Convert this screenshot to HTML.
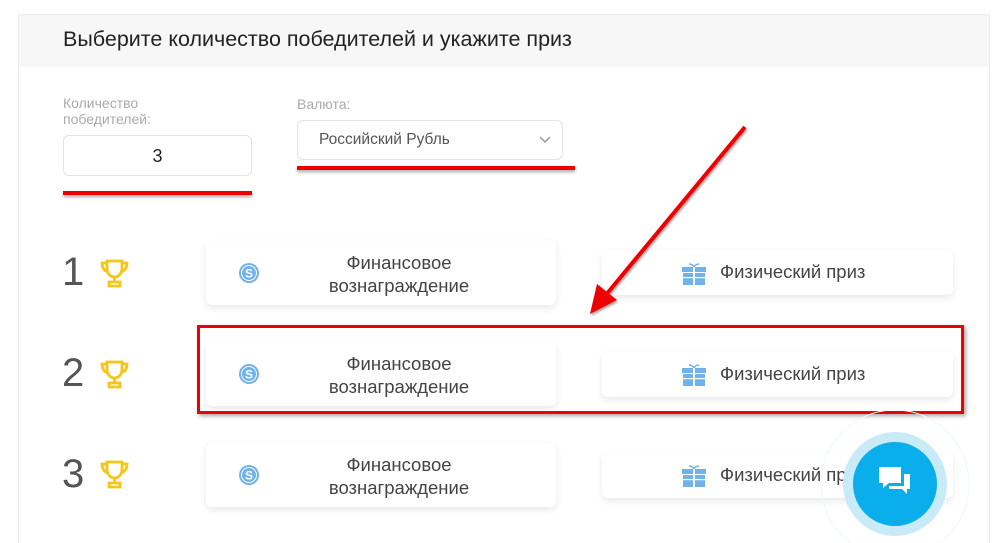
<!DOCTYPE html>
<html style="width:1000px;height:543px;overflow:hidden"><head><meta charset="utf-8"><style>
*{margin:0;padding:0;box-sizing:border-box}
body{width:1000px;height:543px;overflow:hidden;background:#fff;font-family:"Liberation Sans",sans-serif;position:relative}
.card{position:absolute;left:18px;top:14px;width:972px;height:529px;border:1px solid #ececec;border-bottom:none;background:#fff}
.head{position:absolute;left:19px;top:15px;width:970px;height:52px;background:#f7f7f7}
.t{position:absolute;white-space:nowrap}
.box{position:absolute;background:#fff;border-radius:6px;box-shadow:0 3px 8px rgba(0,0,0,.09)}
.num{position:absolute;left:62px;font-size:40px;color:#555;font-weight:300}
.fin{left:206px;width:350px;height:64px}
.phy{left:602px;width:351px;height:45px}
.fin .tx{position:absolute;left:36px;right:0;top:10px;text-align:center;font-size:18.5px;line-height:23px;color:#444}
.phy .tx{position:absolute;left:118px;top:11px;font-size:18.5px;color:#444}
.red{position:absolute;background:#e00;box-shadow:0 2px 3px rgba(0,0,0,.35)}
</style></head><body>
<div class="card"></div>
<div class="head"></div>
<div class="t" style="left:63px;top:27px;font-size:21.5px;color:#222">Выберите количество победителей и укажите приз</div>
<div class="t" style="left:63px;top:95px;font-size:14px;line-height:16px;color:#aaa">Количество<br>победителей:</div>
<div style="position:absolute;left:63px;top:135px;width:189px;height:41px;border:1px solid #e3e3e3;border-radius:6px;text-align:center;font-size:18px;line-height:40px;color:#222">3</div>
<div class="red" style="left:63px;top:191px;width:189px;height:4px"></div>
<div class="t" style="left:297px;top:96px;font-size:14px;color:#aaa">Валюта:</div>
<div style="position:absolute;left:297px;top:120px;width:266px;height:40px;border:1px solid #e3e3e3;border-radius:6px;font-size:15.5px;line-height:38px;color:#555;padding-left:21px">Российский Рубль
<svg style="position:absolute;right:11px;top:15px" width="12" height="8"><path d="M1 1l5 5 5-5" fill="none" stroke="#999" stroke-width="1.5"/></svg></div>
<div class="red" style="left:297px;top:166px;width:278px;height:4px"></div>

<div class="num" style="top:250px">1</div>
<div class="num" style="top:351px">2</div>
<div class="num" style="top:452px">3</div>
<svg style="position:absolute;left:99px;top:258px" width="31" height="31" viewBox="0 0 31 31"><g fill="none" stroke="#f5c518" stroke-width="2.8"><path d="M8 3h15v7c0 5-3 9-7.5 9S8 15 8 10z"/><path d="M8 5H3c0 6 3 8 6 9M23 5h5c0 6-3 8-6 9M15.5 19v4M10 28h11v-4H10z"/></g></svg>
<svg style="position:absolute;left:99px;top:359px" width="31" height="31" viewBox="0 0 31 31"><g fill="none" stroke="#f5c518" stroke-width="2.8"><path d="M8 3h15v7c0 5-3 9-7.5 9S8 15 8 10z"/><path d="M8 5H3c0 6 3 8 6 9M23 5h5c0 6-3 8-6 9M15.5 19v4M10 28h11v-4H10z"/></g></svg>
<svg style="position:absolute;left:99px;top:459px" width="31" height="31" viewBox="0 0 31 31"><g fill="none" stroke="#f5c518" stroke-width="2.8"><path d="M8 3h15v7c0 5-3 9-7.5 9S8 15 8 10z"/><path d="M8 5H3c0 6 3 8 6 9M23 5h5c0 6-3 8-6 9M15.5 19v4M10 28h11v-4H10z"/></g></svg>

<div class="box fin" style="top:241px"><svg style="position:absolute;left:32px;top:21px" width="22" height="22"><circle cx="11" cy="11" r="10" fill="#6fb3ea"/><circle cx="11" cy="11" r="7.5" fill="none" stroke="#fff" stroke-width="1"/><text x="11" y="15.5" font-size="12" font-weight="bold" fill="#fff" text-anchor="middle" font-family="Liberation Sans">S</text></svg><div class="tx">Финансовое<br>вознаграждение</div></div>
<div class="box fin" style="top:342px"><svg style="position:absolute;left:32px;top:21px" width="22" height="22"><circle cx="11" cy="11" r="10" fill="#6fb3ea"/><circle cx="11" cy="11" r="7.5" fill="none" stroke="#fff" stroke-width="1"/><text x="11" y="15.5" font-size="12" font-weight="bold" fill="#fff" text-anchor="middle" font-family="Liberation Sans">S</text></svg><div class="tx">Финансовое<br>вознаграждение</div></div>
<div class="box fin" style="top:443px"><svg style="position:absolute;left:32px;top:21px" width="22" height="22"><circle cx="11" cy="11" r="10" fill="#6fb3ea"/><circle cx="11" cy="11" r="7.5" fill="none" stroke="#fff" stroke-width="1"/><text x="11" y="15.5" font-size="12" font-weight="bold" fill="#fff" text-anchor="middle" font-family="Liberation Sans">S</text></svg><div class="tx">Финансовое<br>вознаграждение</div></div>

<div class="box phy" style="top:250px"><svg style="position:absolute;left:80px;top:11px" width="24" height="25"><g fill="#6fb3ea"><path d="M7 3c2 0 4 1 5 3 1-2 3-3 5-3" fill="none" stroke="#6fb3ea" stroke-width="1.5"/><rect x="0" y="6" width="24" height="5"/><rect x="1" y="12" width="22" height="12"/></g><rect x="11" y="6" width="2" height="18" fill="#fff"/><rect x="0" y="16" width="24" height="1.2" fill="#fff"/></svg><div class="tx">Физический приз</div></div>
<div class="box phy" style="top:352px"><svg style="position:absolute;left:80px;top:10px" width="24" height="25"><g fill="#6fb3ea"><path d="M7 3c2 0 4 1 5 3 1-2 3-3 5-3" fill="none" stroke="#6fb3ea" stroke-width="1.5"/><rect x="0" y="6" width="24" height="5"/><rect x="1" y="12" width="22" height="12"/></g><rect x="11" y="6" width="2" height="18" fill="#fff"/><rect x="0" y="16" width="24" height="1.2" fill="#fff"/></svg><div class="tx">Физический приз</div></div>
<div class="box phy" style="top:453px"><svg style="position:absolute;left:80px;top:10px" width="24" height="25"><g fill="#6fb3ea"><path d="M7 3c2 0 4 1 5 3 1-2 3-3 5-3" fill="none" stroke="#6fb3ea" stroke-width="1.5"/><rect x="0" y="6" width="24" height="5"/><rect x="1" y="12" width="22" height="12"/></g><rect x="11" y="6" width="2" height="18" fill="#fff"/><rect x="0" y="16" width="24" height="1.2" fill="#fff"/></svg><div class="tx">Физический приз</div></div>

<div style="position:absolute;left:197px;top:325px;width:767px;height:89px;border:3px solid #e00;box-shadow:2px 2px 4px rgba(0,0,0,.35)"></div>
<svg style="position:absolute;left:0;top:0" width="1000" height="543"><defs><filter id="s"><feDropShadow dx="1" dy="2" stdDeviation="1" flood-opacity=".35"/></filter></defs><g filter="url(#s)"><line x1="745" y1="127" x2="605" y2="296" stroke="#e00" stroke-width="4"/><path d="M590 314l7-30 20 16z" fill="#e00"/></g><circle cx="895" cy="484" r="74" fill="none" stroke="#eef8fc" stroke-width="1"/></svg>

<div style="position:absolute;left:843px;top:432px;width:104px;height:104px;border-radius:50%;background:#c9ebf8"></div>
<div style="position:absolute;left:853px;top:442px;width:84px;height:84px;border-radius:50%;background:#0aaeea"></div>
<svg style="position:absolute;left:877px;top:465px" width="40" height="38"><path d="M2 2h22v16H12l-6 5v-5H2z" fill="#fff"/><path d="M27 9h6v15h-3v5l-5-5H12v-3h15z" fill="#fff"/></svg>
</body></html>
